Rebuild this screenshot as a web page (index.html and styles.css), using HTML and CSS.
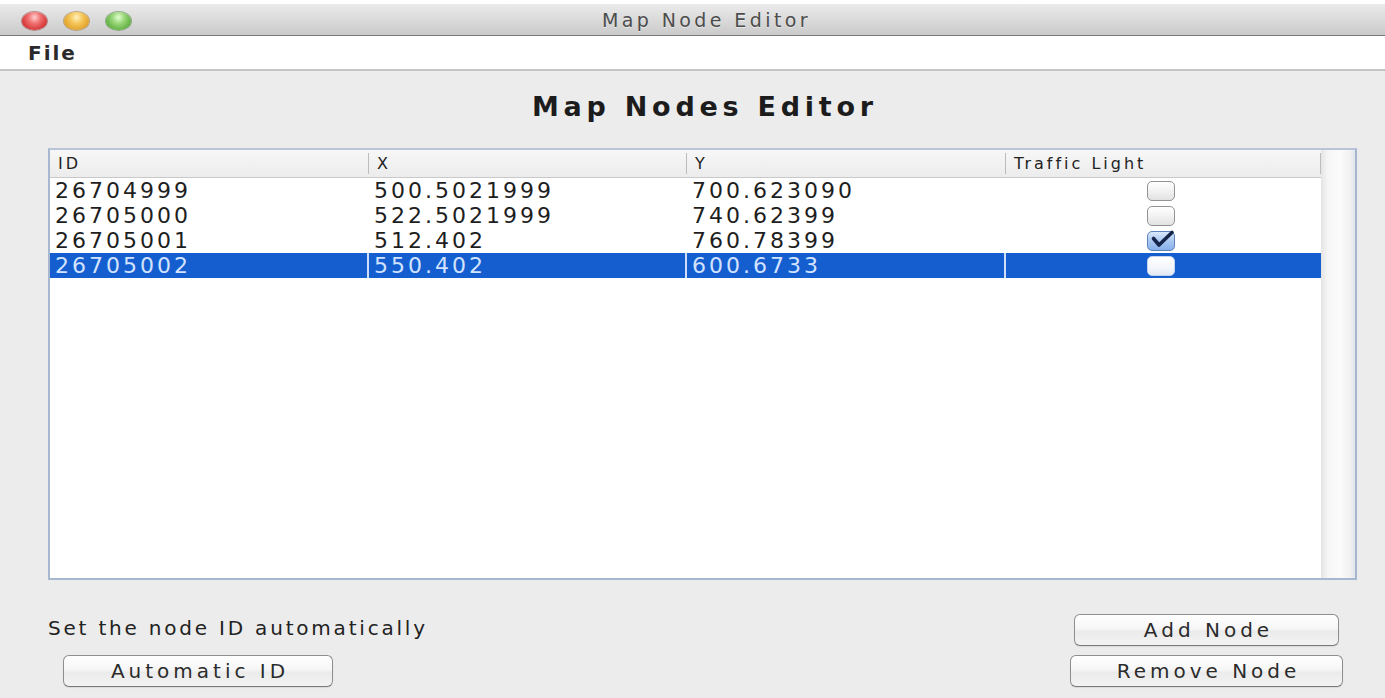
FILE: index.html
```html
<!DOCTYPE html>
<html lang="en">
<head>
<meta charset="utf-8">
<title>Map Node Editor</title>
<link rel="stylesheet" href="styles.css">
</head>
<body>
  <div class="top-strip"></div>
  <header class="titlebar">
    <div class="lights">
      <span class="light light-close"></span>
      <span class="light light-min"></span>
      <span class="light light-max"></span>
    </div>
    <div class="title">Map Node Editor</div>
    <div class="titlebar-spacer"></div>
  </header>
  <nav class="menubar"><span class="menu-item">File</span></nav>

  <main class="content">
    <h1 class="heading">Map Nodes Editor</h1>

    <div class="table-frame">
      <div class="table">
        <div class="row head">
          <div class="cell">ID</div>
          <div class="cell">X</div>
          <div class="cell">Y</div>
          <div class="cell">Traffic Light</div>
        </div>
        <div class="row">
          <div class="cell">26704999</div>
          <div class="cell">500.5021999</div>
          <div class="cell">700.623090</div>
          <div class="cell cell-check"><span class="check"></span></div>
        </div>
        <div class="row">
          <div class="cell">26705000</div>
          <div class="cell">522.5021999</div>
          <div class="cell">740.62399</div>
          <div class="cell cell-check"><span class="check"></span></div>
        </div>
        <div class="row">
          <div class="cell">26705001</div>
          <div class="cell">512.402</div>
          <div class="cell">760.78399</div>
          <div class="cell cell-check">
            <span class="check check-on">
              <svg class="tick" viewBox="0 0 28 20" width="28" height="20"><path d="M6.5 8.5 L12 15 L25 2.5"/></svg>
            </span>
          </div>
        </div>
        <div class="row selected">
          <div class="cell">26705002</div>
          <div class="cell">550.402</div>
          <div class="cell">600.6733</div>
          <div class="cell cell-check"><span class="check"></span></div>
        </div>
      </div>
      <div class="scroll-track"></div>
    </div>

    <div class="controls">
      <div class="controls-left">
        <p class="hint">Set the node ID automatically</p>
        <button class="btn btn-auto" type="button">Automatic ID</button>
      </div>
      <div class="controls-right">
        <button class="btn btn-add" type="button">Add Node</button>
        <button class="btn btn-remove" type="button">Remove Node</button>
      </div>
    </div>
  </main>
</body>
</html>
```

FILE: styles.css
```css
* {
  box-sizing: border-box;
}

html,
body {
  margin: 0;
  padding: 0;
}

body {
  width: 1385px;
  height: 698px;
  overflow: hidden;
  background: #ececec;
  font-family: "DejaVu Sans", "Liberation Sans", sans-serif;
  color: #222;
}

.top-strip {
  height: 4px;
  background: #fff;
}

/* window title bar */
.titlebar {
  height: 32px;
  display: grid;
  grid-template-columns: 1fr auto 1fr;
  align-items: center;
  background: linear-gradient(#ebebeb, #dcdcdc 45%, #cacaca);
  border-bottom: 1px solid #7b7b7b;
}

.lights {
  display: flex;
  gap: 17px;
  padding-left: 22px;
  padding-top: 2px;
}

.light {
  width: 25px;
  height: 18px;
  border-radius: 50%;
  display: block;
}

.light-close {
  background: radial-gradient(ellipse at 50% 30%, #ffd0d0 0%, #f07070 35%, #d33434 75%, #b52a2a 100%);
  box-shadow: 0 0 0 1px rgba(140, 40, 40, 0.45);
}

.light-min {
  background: radial-gradient(ellipse at 50% 30%, #fff0c0 0%, #f5c85a 35%, #e2a12a 75%, #c78a1e 100%);
  box-shadow: 0 0 0 1px rgba(150, 100, 20, 0.45);
}

.light-max {
  background: radial-gradient(ellipse at 50% 30%, #e0ffd0 0%, #9ad67a 35%, #5fb040 75%, #4a9432 100%);
  box-shadow: 0 0 0 1px rgba(50, 110, 30, 0.45);
}

.title {
  padding-left: 28px;
  font-size: 19px;
  letter-spacing: 3.4px;
  line-height: 32px;
  color: #4d4d4d;
  text-shadow: 0 1px 0 rgba(255, 255, 255, 0.5);
}

/* menu bar */
.menubar {
  height: 35px;
  display: flex;
  align-items: center;
  padding-left: 28px;
  background: #fff;
  border-bottom: 2px solid #c4c4c4;
}

.menu-item {
  font-size: 20px;
  font-weight: bold;
  letter-spacing: 2px;
  color: #2a2a2a;
}

/* editor panel */
.content {
  padding: 0 28px 0 48px;
}

.heading {
  margin: 20px 0 0;
  font-size: 27px;
  line-height: 32px;
  font-weight: bold;
  text-align: center;
  letter-spacing: 4.75px;
  text-indent: 4.75px;
  color: #1c1c1c;
}

.table-frame {
  margin-top: 25px;
  height: 432px;
  display: flex;
  background: #fff;
  border: 2px solid #a6b7cf;
  border-top-color: #b8c5d8;
}

.table {
  width: 1271px;
}

.scroll-track {
  flex: 1;
  background: linear-gradient(90deg, #e4e4e4 0, #f6f6f6 20%, #fbfbfb 55%, #f1f1f1 85%, #e2e6ec 100%);
}

.row {
  display: grid;
  grid-template-columns: 319px 318px 319px 315px;
  height: 25px;
  font-size: 22px;
  line-height: 25px;
  letter-spacing: 3px;
  color: #1e1e1e;
}

.row .cell {
  padding-left: 5px;
  white-space: nowrap;
}

.row.head {
  height: 28px;
  font-size: 16px;
  line-height: 27px;
  letter-spacing: 3px;
  color: #222;
  background: linear-gradient(#f7f7f7, #ececec);
  border-bottom: 1px solid #c9c9c9;
}

.row.head .cell {
  padding-left: 8px;
  background: linear-gradient(#bcbcbc, #bcbcbc) right 3px / 1px 21px no-repeat;
}

.row.selected {
  background: #155ed0;
  color: #d2e3ff;
}

.row.selected .cell {
  box-shadow: inset -2px 0 0 #cfdff7;
}

.row.selected .cell-check {
  box-shadow: none;
}

.cell-check {
  display: flex;
  justify-content: center;
  align-items: center;
  padding-right: 5px;
}

.row .cell-check {
  padding-left: 0;
}

/* checkboxes */
.check {
  position: relative;
  display: block;
  width: 28px;
  height: 20px;
  border: 1px solid #939393;
  border-radius: 5px;
  background: linear-gradient(#ffffff, #f2f2f2 50%, #e2e2e2);
}

.check-on {
  border-color: #5f84bb;
  background: linear-gradient(#d9e8fc, #a9c8f1 50%, #86b0ea);
}

.selected .check {
  border-color: #c3d3ee;
  background: linear-gradient(#ffffff, #f3f6fb 60%, #e3e9f3);
}

.tick {
  position: absolute;
  left: -1px;
  top: -2px;
  overflow: visible;
}

.tick path {
  fill: none;
  stroke: #15264a;
  stroke-width: 3.6;
  stroke-linecap: round;
  stroke-linejoin: round;
}

/* bottom controls */
.controls {
  margin-top: 30px;
  display: flex;
  justify-content: space-between;
  align-items: flex-start;
}

.controls-left {
  display: flex;
  flex-direction: column;
  align-items: flex-start;
}

.hint {
  margin: 0;
  padding-top: 6px;
  font-size: 20px;
  line-height: 24px;
  letter-spacing: 2.8px;
  color: #222;
}

.controls-right {
  display: flex;
  flex-direction: column;
  align-items: center;
  gap: 9px;
  padding-top: 4px;
  margin-right: 14px;
}

.btn {
  height: 32px;
  padding: 0;
  border: 1px solid #8e8e8e;
  border-bottom-color: #7a7a7a;
  border-radius: 6px;
  background: linear-gradient(#ffffff, #f6f6f6 45%, #ebebeb 55%, #f3f3f3);
  font-family: "DejaVu Sans", "Liberation Sans", sans-serif;
  font-size: 20px;
  letter-spacing: 4px;
  text-indent: 4px;
  color: #2b2b2b;
  box-shadow: 0 1px 1px rgba(0, 0, 0, 0.08);
}

.btn-auto {
  width: 270px;
  margin-top: 15px;
  margin-left: 15px;
}

.btn-add {
  width: 265px;
}

.btn-remove {
  width: 273px;
}
```
